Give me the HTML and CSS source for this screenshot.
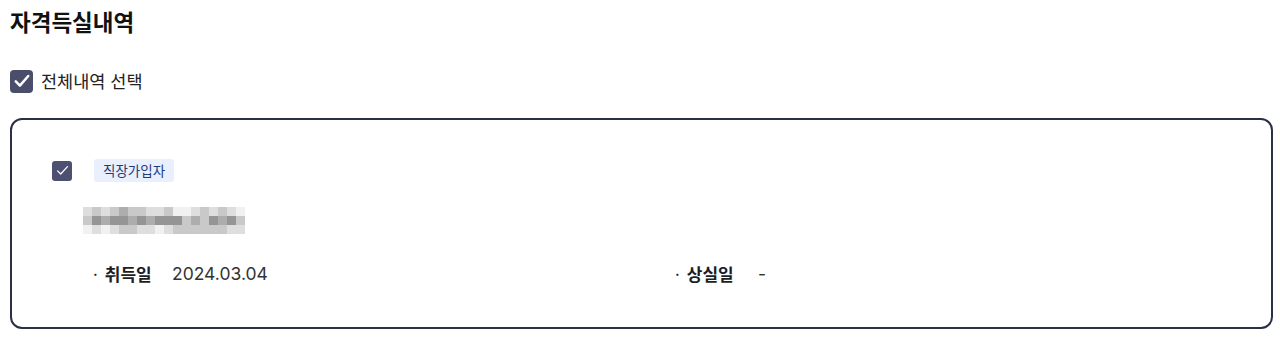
FILE: index.html
```html
<!DOCTYPE html>
<html lang="ko">

<head>
    <meta charset="UTF-8">
    <meta name="viewport" content="width=device-width, initial-scale=1.0">
    <title>자격득실내역</title>
    <link rel="stylesheet" href="styles.css">
</head>

<body>
    <div class="page">
        <h2 class="title">자격득실내역</h2>

        <label class="check-all">
            <span class="box box-lg">
                <svg viewBox="0 0 24 24" width="20" height="20"><path d="M4.5 12.5l5 5L19.5 6" fill="none" stroke="#fff" stroke-width="3" stroke-linecap="round" stroke-linejoin="round"/></svg>
            </span>
            <span class="check-label">전체내역 선택</span>
        </label>

        <div class="card">
            <div class="card-head">
                <span class="box box-sm">
                    <svg viewBox="0 0 24 24" width="17" height="17"><path d="M5 12.5l4.5 4.5L19 6.5" fill="none" stroke="#fff" stroke-width="1.8" stroke-linecap="round" stroke-linejoin="round"/></svg>
                </span>
                <span class="badge">직장가입자</span>
            </div>

            <!-- 사업장명 (마스킹) -->
            <div class="masked">
                <span class="p c1"></span><span class="p c2"></span><span class="p c1"></span><span class="p c2"></span><span class="p c3"></span><span class="p c2"></span><span class="p c2"></span><span class="p c1"></span><span class="p c1"></span><span class="p c2"></span><span class="p c0"></span><span class="p c0"></span><span class="p c1"></span><span class="p c2"></span><span class="p c1"></span><span class="p c2"></span><span class="p c1"></span><span class="p c0"></span>
                <span class="p c2"></span><span class="p c4"></span><span class="p c3"></span><span class="p c4"></span><span class="p c4"></span><span class="p c3"></span><span class="p c4"></span><span class="p c3"></span><span class="p c4"></span><span class="p c4"></span><span class="p c4"></span><span class="p c2"></span><span class="p c3"></span><span class="p c2"></span><span class="p c4"></span><span class="p c3"></span><span class="p c4"></span><span class="p c2"></span>
                <span class="p c0"></span><span class="p c1"></span><span class="p c0"></span><span class="p c1"></span><span class="p c2"></span><span class="p c2"></span><span class="p c1"></span><span class="p c1"></span><span class="p c0"></span><span class="p c1"></span><span class="p c2"></span><span class="p c2"></span><span class="p c2"></span><span class="p c2"></span><span class="p c2"></span><span class="p c2"></span><span class="p c1"></span><span class="p c1"></span>
            </div>

            <div class="fields">
                <div class="field">
                    <span class="field-name">취득일</span>
                    <span class="field-value">2024.03.04</span>
                </div>
                <div class="field">
                    <span class="field-name">상실일</span>
                    <span class="field-value dash">-</span>
                </div>
            </div>
        </div>
    </div>
</body>

</html>
```

FILE: styles.css
```css
body {
    margin: 0;
    font-family: "Noto Sans CJK KR", "Noto Sans", sans-serif;
    color: #1b1b1f;
    background-color: #fff;
}

.page {
    padding: 4px 7px 0 10px;
}

.title {
    margin: 0;
    font-size: 22.5px;
    font-weight: 700;
    line-height: 34px;
    color: #111;
}

.check-all {
    display: flex;
    align-items: center;
    gap: 8px;
    margin-top: 31px;
}

.box {
    display: flex;
    align-items: center;
    justify-content: center;
    background-color: #4b4e6a;
    border-radius: 4px;
}

.box-lg {
    width: 23px;
    height: 23px;
}

.box-sm {
    width: 20px;
    height: 20px;
    border-radius: 3px;
    background-color: #4d5070;
}

.check-label {
    font-size: 17.5px;
    line-height: 24px;
    color: #222;
}

.card {
    margin-top: 25px;
    height: 211px;
    box-sizing: border-box;
    border: 2px solid #2b2f48;
    border-radius: 12px;
    padding: 39px 40px 0 39px;
}

.card-head {
    display: flex;
    align-items: center;
    gap: 22px;
    margin-left: 1px;
}

.badge {
    display: inline-block;
    padding: 0 9px;
    height: 23px;
    line-height: 23px;
    font-size: 13.5px;
    color: #233a7a;
    background-color: #e9effc;
    border-radius: 3px;
}

.masked {
    display: grid;
    grid-template-columns: repeat(18, 9px);
    grid-auto-rows: 9px;
    margin: 25px 0 0 32px;
    width: 162px;
}

.p {
    display: block;
}

.c0 { background-color: #f1f1f1; }
.c1 { background-color: #dedede; }
.c2 { background-color: #c9c9c9; }
.c3 { background-color: #adadad; }
.c4 { background-color: #959595; }

.fields {
    display: grid;
    grid-template-columns: 582px 1fr;
    margin: 28px 0 0 42px;
}

.field {
    display: flex;
    align-items: center;
    font-size: 17px;
    line-height: 24px;
}

.field-name {
    font-weight: 700;
    color: #1d1d24;
    width: 79px;
}

.field-name::before {
    content: "·";
    font-weight: 400;
    margin-right: 7px;
}

.field-value {
    color: #333;
    font-size: 17.5px;
    font-family: Inter, "Noto Sans CJK KR", sans-serif;
}

.dash {
    margin-left: 4px;
}
```
